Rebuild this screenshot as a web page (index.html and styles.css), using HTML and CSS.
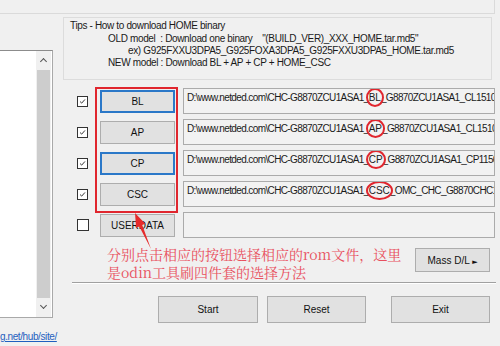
FILE: index.html
```html
<!DOCTYPE html>
<html lang="en">
<head>
    <meta charset="UTF-8">
    <title>Odin - file select</title>
    <link rel="stylesheet" href="styles.css">
</head>
<body>
    <div class="topbar"></div>
    <div class="main">
        <div class="side">
            <div class="listbox">
                <div class="scroll">
                    <span class="caret up"></span>
                    <div class="thumb"></div>
                    <span class="caret down"></span>
                </div>
            </div>
            <a class="link" href="#">g.net/hub/site/</a>
        </div>

        <div class="panel">
            <div class="tips">
                <div class="tips-title">Tips - How to download HOME binary</div>
                <div class="tips-line">OLD model  : Download one binary    "(BUILD_VER)_XXX_HOME.tar.md5"</div>
                <div class="tips-line ex">ex) G925FXXU3DPA5_G925FOXA3DPA5_G925FXXU3DPA5_HOME.tar.md5</div>
                <div class="tips-line">NEW model : Download BL + AP + CP + HOME_CSC</div>
            </div>

            <div class="files">
                <div class="row">
                    <span class="check on"><svg viewBox="0 0 11 11"><polyline points="2.5,5.5 4.5,7.5 8.5,3"/></svg></span>
                    <button class="btn file focus">BL</button>
                    <div class="path">D:\www.netded.com\CHC-G8870ZCU1ASA1_<span class="mark">BL</span>_G8870ZCU1ASA1_CL15109330_REV00_user_low_ship.tar.md5</div>
                </div>
                <div class="row">
                    <span class="check on"><svg viewBox="0 0 11 11"><polyline points="2.5,5.5 4.5,7.5 8.5,3"/></svg></span>
                    <button class="btn file">AP</button>
                    <div class="path">D:\www.netded.com\CHC-G8870ZCU1ASA1_<span class="mark">AP</span>_G8870ZCU1ASA1_CL15109330_REV00_user_low_ship.tar.md5</div>
                </div>
                <div class="row">
                    <span class="check on"><svg viewBox="0 0 11 11"><polyline points="2.5,5.5 4.5,7.5 8.5,3"/></svg></span>
                    <button class="btn file focus">CP</button>
                    <div class="path">D:\www.netded.com\CHC-G8870ZCU1ASA1_<span class="mark">CP</span>_G8870ZCU1ASA1_CP11569012_REV00_user_low_ship.tar.md5</div>
                </div>
                <div class="row">
                    <span class="check on"><svg viewBox="0 0 11 11"><polyline points="2.5,5.5 4.5,7.5 8.5,3"/></svg></span>
                    <button class="btn file">CSC</button>
                    <div class="path">D:\www.netded.com\CHC-G8870ZCU1ASA1_<span class="mark">CSC</span>_OMC_CHC_G8870CHC1ASA1_CL15109330.tar.md5</div>
                </div>
                <div class="row">
                    <span class="check big"></span>
                    <button class="btn file">USERDATA</button>
                    <div class="path"></div>
                </div>
            </div>

            <div class="note-row">
                <p class="note">分别点击相应的按钮选择相应的rom文件，这里<br>是odin工具刷四件套的选择方法</p>
                <button class="btn mass">Mass D/L <span class="tri">&#9658;</span></button>
            </div>

            <div class="sep"></div>

            <div class="actions">
                <button class="btn big start">Start</button>
                <button class="btn big reset">Reset</button>
                <button class="btn big exit">Exit</button>
            </div>

            <!-- annotations drawn over the screenshot -->
            <div class="red-box"></div>
            <svg class="arrow" viewBox="0 0 40 50" width="40" height="50">
                <polygon points="12,4 22.3,14.8 19.2,16.1 28,40 16.3,17.4 13.1,18.8"/>
            </svg>
        </div>
    </div>
</body>
</html>
```

FILE: styles.css
```css
body {
    margin: 0;
    width: 500px;
    height: 346px;
    overflow: hidden;
    background: #f0f0f0;
    font-family: "Liberation Sans", Arial, sans-serif;
    font-size: 10px;
    color: #1a1a1a;
}

.topbar {
    width: 495px;
    height: 14px;
    box-sizing: border-box;
    border-bottom: 1px solid #dadada;
    border-right: 1px solid #dadada;
}

.main {
    display: flex;
}

/* left list + link */
.side {
    width: 63px;
    flex: none;
    display: flex;
    flex-direction: column;
}
.listbox {
    margin: 36px 0 0 -2px;
    width: 55px;
    height: 268px;
    box-sizing: border-box;
    background: #fff;
    border: 1px solid #a9a9a9;
    border-top-color: #8c8c8c;
    display: flex;
    justify-content: flex-end;
}
.scroll {
    width: 15px;
    margin-right: 1px;
    background: #f0f0f0;
    display: flex;
    flex-direction: column;
    align-items: center;
}
.caret {
    width: 4px;
    height: 4px;
    border-left: 1.5px solid #555;
    border-top: 1.5px solid #555;
    transform: rotate(45deg);
}
.caret.up {
    margin-top: 8px;
}
.caret.down {
    margin-top: 5px;
    transform: rotate(225deg);
}
.thumb {
    margin-top: 6px;
    width: 13px;
    height: 228px;
    background: #cdcdcd;
}
.link {
    margin-top: 13px;
    color: #1f5fbf;
    line-height: 12px;
    white-space: nowrap;
    letter-spacing: -0.4px;
}

/* right panel */
.panel {
    position: relative;
    width: 437px;
    flex: none;
}
.tips {
    margin-top: 3px;
    width: 429px;
    height: 63px;
    box-sizing: border-box;
    border: 1px solid #dcdcdc;
    padding: 2px 6px;
    line-height: 12px;
    letter-spacing: -0.35px;
}
.tips-title {
    margin-bottom: 1px;
}
.tips-line {
    margin-left: 38px;
    white-space: pre;
}
.tips-line.ex {
    margin-left: 58px;
}

.files {
    margin-top: 8px;
    display: flex;
    flex-direction: column;
    gap: 5px;
}
.row {
    display: flex;
    align-items: center;
    height: 26px;
    padding-left: 14px;
}
.check {
    width: 11px;
    height: 11px;
    box-sizing: border-box;
    border: 1px solid #333;
    background: #fff;
    margin-right: 12px;
    display: flex;
}
.check.big {
    width: 12px;
    height: 12px;
    margin-right: 11px;
}
.check svg {
    width: 9px;
    height: 9px;
    fill: none;
    stroke: #333;
    stroke-width: 1.2;
}

.btn {
    font-family: "Liberation Sans", Arial, sans-serif;
    font-size: 10px;
    color: #111;
    background: #e1e1e1;
    border: 1px solid #adadad;
    padding: 0;
    box-sizing: border-box;
}
.btn.file {
    width: 75px;
    height: 23px;
}
.btn.focus {
    border: 2px solid #2b78c8;
}
.path {
    margin-left: 8px;
    width: 312px;
    height: 26px;
    box-sizing: border-box;
    border: 1px solid #ababab;
    background: #f2f2f2;
    padding: 3px 3px 0;
    align-self: flex-start;
    white-space: nowrap;
    overflow: hidden;
    line-height: 12px;
    letter-spacing: -0.62px;
}
.mark {
    position: relative;
    letter-spacing: 0;
}
.mark::after {
    content: "";
    position: absolute;
    left: -3px;
    right: -3px;
    top: -4px;
    bottom: -4px;
    border: 2px solid #e0262e;
    border-radius: 50%;
}

.note-row {
    margin-top: 7px;
    height: 36px;
    display: flex;
    justify-content: space-between;
}
.note {
    margin: 0 0 0 44px;
    font-family: "Noto Serif CJK SC", "Noto Sans CJK SC", sans-serif;
    font-size: 14px;
    line-height: 18px;
    color: #e8505f;
}
.btn.mass {
    margin: 3px 10px 0 0;
    width: 75px;
    height: 24px;
}
.tri {
    font-family: "DejaVu Sans", sans-serif;
    font-size: 7px;
}

.sep {
    margin: 1px 4px 0 9px;
    border-top: 1px solid #a0a0a0;
    border-bottom: 1px solid #fff;
}

.actions {
    margin-top: 12px;
    display: flex;
}
.btn.big {
    height: 27px;
    width: 99px;
}
.btn.start {
    margin-left: 95px;
    width: 100px;
}
.btn.reset {
    margin-left: 9px;
}
.btn.exit {
    margin-left: 25px;
}

.red-box {
    position: absolute;
    left: 32px;
    top: 73px;
    width: 83px;
    height: 126px;
    box-sizing: border-box;
    border: 2px solid #e0262e;
}
.arrow {
    position: absolute;
    left: 60px;
    top: 195px;
    fill: #e52b2b;
}
```
